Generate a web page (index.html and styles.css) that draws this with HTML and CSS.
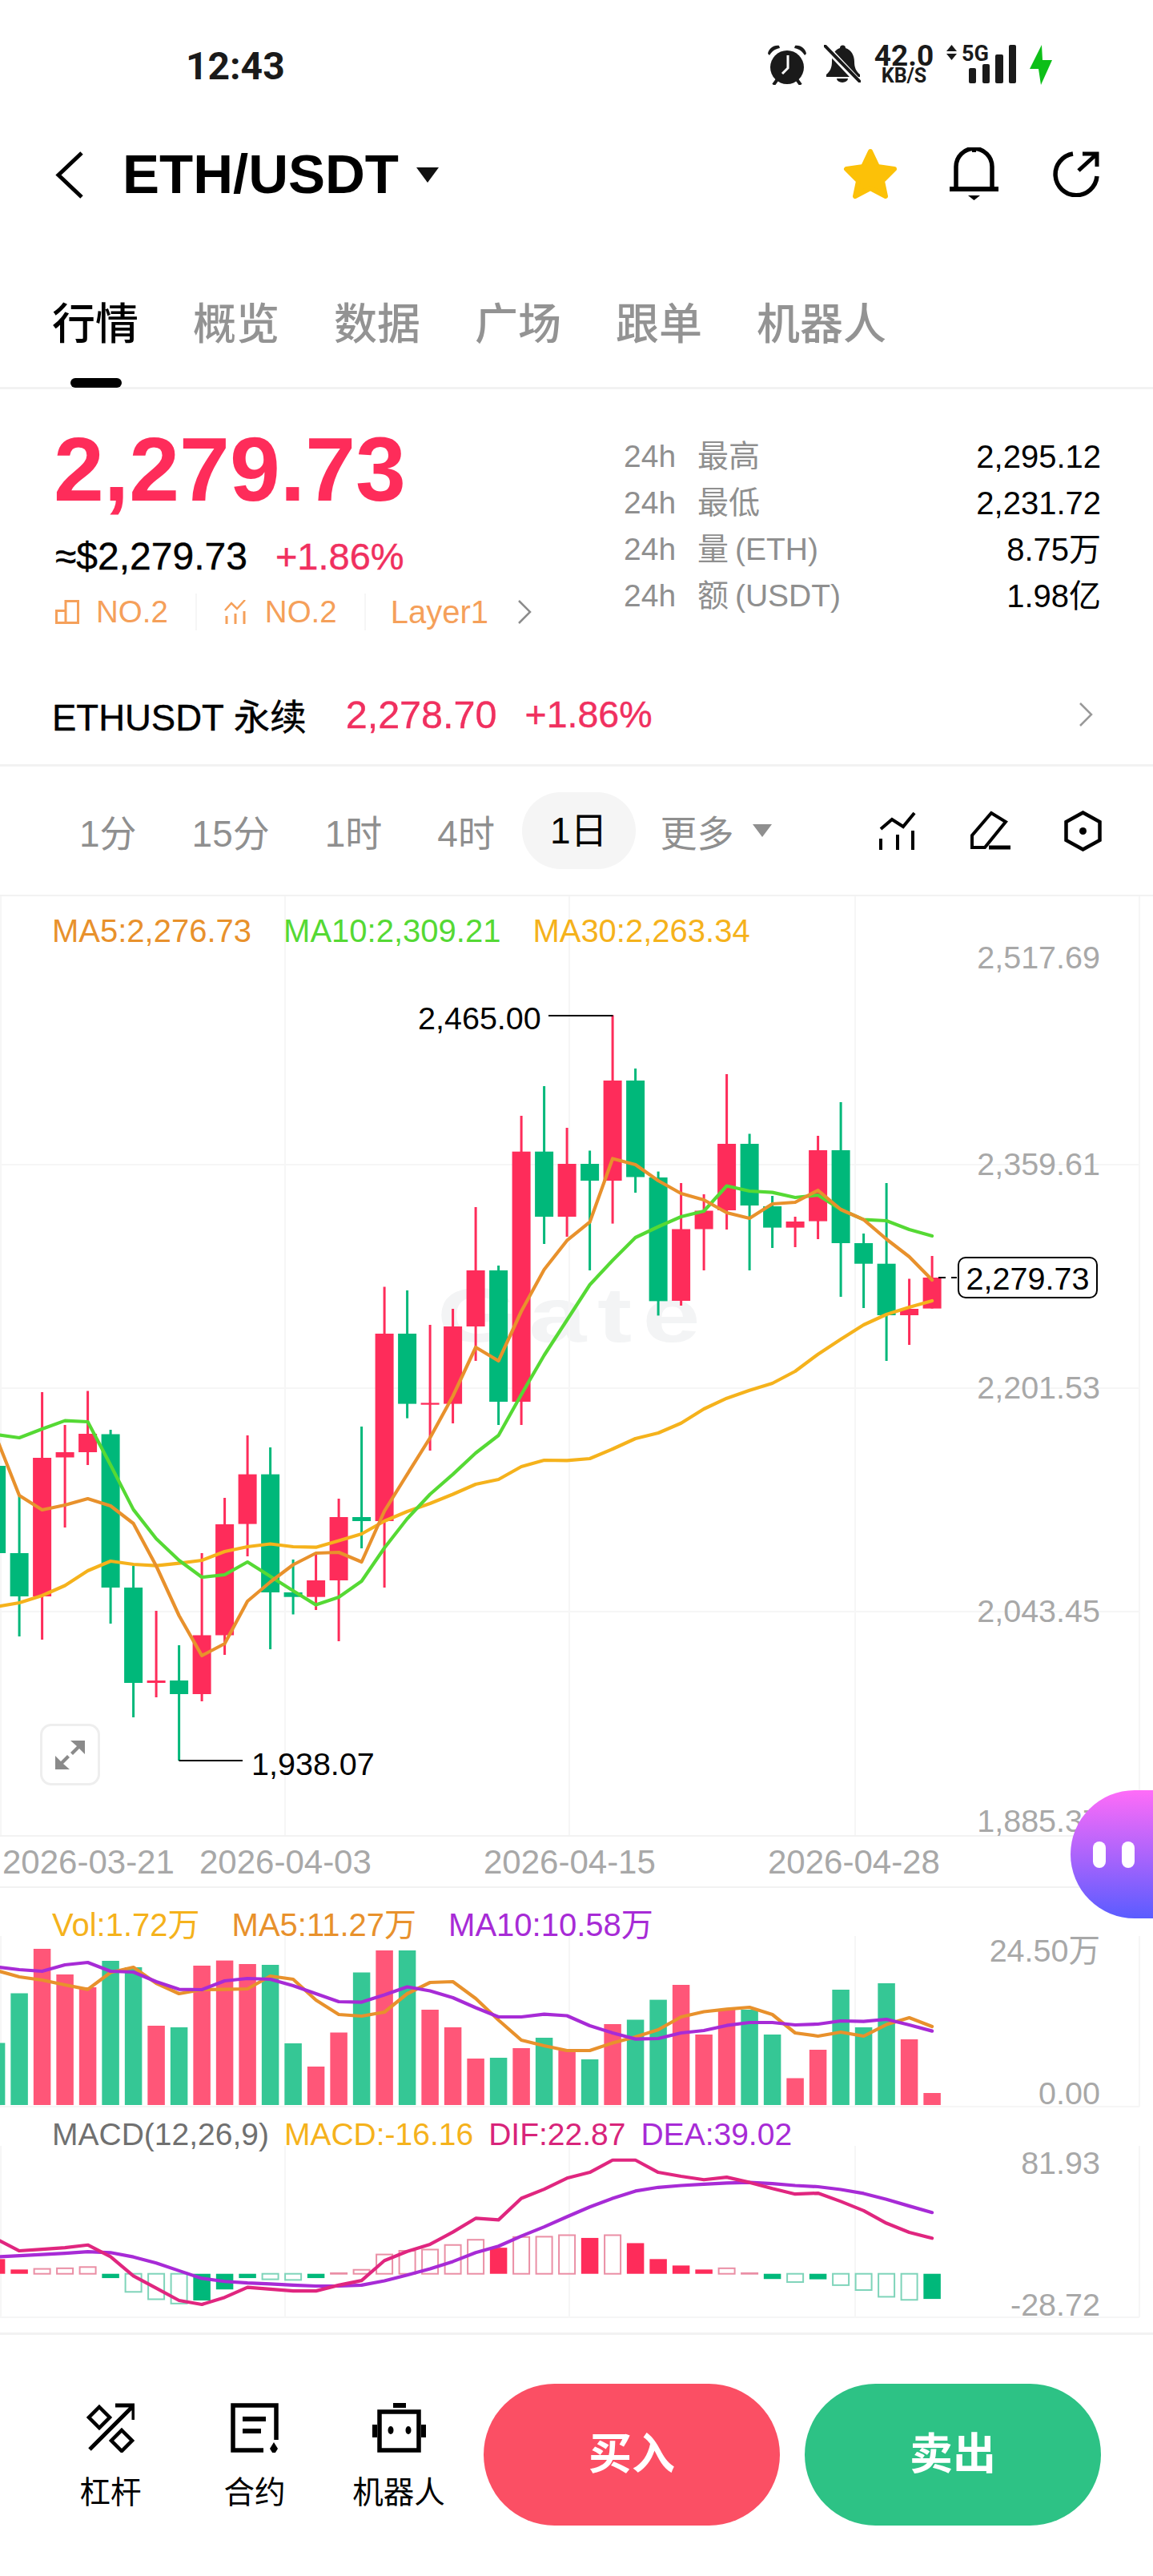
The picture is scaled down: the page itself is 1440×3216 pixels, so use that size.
FILE: index.html
```html
<!DOCTYPE html>
<html lang="zh-CN">
  <head>
    <meta charset="UTF-8" />
    <meta name="viewport" content="width=device-width, initial-scale=1.0" />
    <title>ETH/USDT</title>
    <link rel="stylesheet" href="styles.css">
  </head>
  <body>
    <div class="page">
      <!-- 状态栏 -->
      <div class="status">
        <span class="clock">12:43</span>
        <div class="status-icons">
          <svg class="ic-alarm" width="48" height="50" viewBox="0 0 48 50">
            <circle cx="24" cy="28" r="21" fill="#1a1a1a"/>
            <path d="M0 11C1 5 7 0 14 1L15 4C9 5 5 8 2 13Z" fill="#1a1a1a"/>
            <path d="M48 11C47 5 41 0 34 1L33 4C39 5 43 8 46 13Z" fill="#1a1a1a"/>
            <path d="M25 13V29L18 36" stroke="#fff" stroke-width="3" fill="none"/>
            <path d="M12 43L7 50M36 43L41 50" stroke="#1a1a1a" stroke-width="4"/>
          </svg>
          <svg class="ic-mute" width="46" height="47" viewBox="0 0 46 47">
            <path d="M20 4a3.5 3.5 0 0 1 7 0c7 2 11 9 11 17 0 7 2 12 7 16v3H3v-3c5-4 7-9 7-16 0-8 3-15 10-17z" fill="#1a1a1a"/>
            <path d="M16 42h14a7 5 0 0 1-14 0z" fill="#1a1a1a"/>
            <path d="M-2 -2L44 47" stroke="#fff" stroke-width="8"/>
            <path d="M1 1L45 46" stroke="#1a1a1a" stroke-width="4" stroke-linecap="round"/>
          </svg>
          <div class="netspeed">
            <span class="net-num">42.0</span>
            <span class="net-unit">KB/S</span>
          </div>
          <svg class="ic-signal" width="87" height="58" viewBox="0 -8 87 58">
            <path d="M6.5 0L13 8H0ZM0 11H13L6.5 19Z" fill="#1a1a1a"/>
            <text class="sig-text" x="19" y="20">5G</text>
            <rect x="28" y="29" width="9" height="19" rx="2" fill="#1a1a1a"/>
            <rect x="45" y="24" width="9" height="24" rx="2" fill="#1a1a1a"/>
            <rect x="61" y="12" width="10" height="36" rx="2" fill="#1a1a1a"/>
            <rect x="78" y="0" width="9" height="48" rx="2" fill="#1a1a1a"/>
          </svg>
          <svg class="ic-bolt" width="28" height="50" viewBox="0 0 28 50">
            <path d="M15 0L0 30H11L14 50L28 19H16Z" fill="#0dbf18"/>
          </svg>
        </div>
      </div>

      <!-- 标题 -->
      <div class="header">
        <svg width="35" height="59" viewBox="0 0 35 59">
          <path d="M33 2L4 29.5L33 57" fill="none" stroke="#000" stroke-width="5"/>
        </svg>
        <h1 class="pair">ETH/USDT</h1>
        <span class="caret caret-dark"></span>
        <div class="header-icons">
          <svg width="68" height="64" viewBox="0 0 68 64">
            <path d="M34 4L43 23L64 26L49 41L53 60L34 50L15 60L19 41L4 26L25 23Z" fill="#fcc108" stroke="#fcc108" stroke-width="6" stroke-linejoin="round"/>
          </svg>
          <svg width="61" height="66" viewBox="0 0 61 66">
            <path d="M8 51V24a22.500 22.500 0 0 1 45 0V51" fill="none" stroke="#000" stroke-width="5.500"/>
            <rect x="28" y="0" width="5" height="6"/>
            <rect x="0" y="49" width="61" height="6"/>
            <path d="M23 60H38L30.500 66Z"/>
          </svg>
          <svg class="ic-refresh" width="58" height="58" viewBox="0 0 58 58">
            <path d="M25 4A26 26 0 1 0 55 32" fill="none" stroke="#000" stroke-width="5.500"/>
            <path d="M32 25L55 4M37 4H55V20" fill="none" stroke="#000" stroke-width="5"/>
          </svg>
        </div>
      </div>

      <div class="tabs">
        <span class="tab tab-active">行情</span>
        <span class="tab">概览</span>
        <span class="tab">数据</span>
        <span class="tab">广场</span>
        <span class="tab">跟单</span>
        <span class="tab">机器人</span>
      </div>

      <!-- 行情摘要 -->
      <div class="summary">
        <div class="quote">
          <div class="quote-left">
            <div class="last-price">2,279.73</div>
            <div class="sub-price">
              <span class="fiat">≈$2,279.73</span>
              <span class="change">+1.86%</span>
            </div>
            <div class="tags">
              <svg class="tag-ic" width="30" height="30" viewBox="0 0 30 30">
                <path d="M1.500 13.500H13V28.500H1.500ZM13 28.500V1.500H28.500V28.500H13" fill="none" stroke="#f5a05a" stroke-width="3"/>
              </svg>
              <span>NO.2</span>
              <i class="tag-sep"></i>
              <svg class="tag-ic" width="30" height="30" viewBox="0 0 30 30">
                <path d="M1 13L9 4L16 11L26 0" fill="none" stroke="#f5a05a" stroke-width="2.500"/>
                <path d="M3 20V30M14 17V30M25 14V30" fill="none" stroke="#f5a05a" stroke-width="3"/>
              </svg>
              <span>NO.2</span>
              <i class="tag-sep"></i>
              <span class="tag-layer">Layer1</span>
              <svg class="tag-chev" width="18" height="30" viewBox="0 0 18 30">
                <path d="M2 1L16 15L2 29" fill="none" stroke="#8c8c8c" stroke-width="2.500"/>
              </svg>
            </div>
          </div>
          <div class="stats">
            <div class="stat"><span class="stat-name"><b>24h</b>最高</span><span>2,295.12</span></div>
            <div class="stat"><span class="stat-name"><b>24h</b>最低</span><span>2,231.72</span></div>
            <div class="stat"><span class="stat-name"><b>24h</b>量 (ETH)</span><span>8.75万</span></div>
            <div class="stat"><span class="stat-name"><b>24h</b>额 (USDT)</span><span>1.98亿</span></div>
          </div>
        </div>
        <div class="perp">
          <span class="perp-name">ETHUSDT 永续</span>
          <span class="perp-price">2,278.70</span>
          <span class="perp-change">+1.86%</span>
          <svg class="perp-chev" width="18" height="30" viewBox="0 0 18 30">
            <path d="M2 1L16 15L2 29" fill="none" stroke="#999" stroke-width="2.500"/>
          </svg>
        </div>
      </div>

      <!-- 周期 -->
      <div class="periods">
        <span class="period">1分</span>
        <span class="period">15分</span>
        <span class="period">1时</span>
        <span class="period">4时</span>
        <span class="period period-active">1日</span>
        <span class="period period-more">更多</span>
        <span class="caret caret-gray"></span>
        <div class="period-icons">
          <svg width="46" height="47" viewBox="0 0 46 47">
            <path d="M2 21L16 9L30 18L44 1" fill="none" stroke="#000" stroke-width="4"/>
            <path d="M2 33V47M23 28V47M42 23V47" fill="none" stroke="#000" stroke-width="4"/>
          </svg>
          <svg width="51" height="51" viewBox="0 0 51 51">
            <path d="M27 3L45 14L19 46H3V31Z" fill="none" stroke="#000" stroke-width="4"/>
            <path d="M24 46H51" fill="none" stroke="#000" stroke-width="5"/>
          </svg>
          <svg width="47" height="51" viewBox="0 0 47 51">
            <path d="M23.500 2.500L44.500 14V37L23.500 48.500L2.500 37V14Z" fill="none" stroke="#000" stroke-width="4.500"/>
            <circle cx="23.500" cy="25.500" r="4.500"/>
          </svg>
        </div>
      </div>

      <!-- 主图 -->
      <div class="panel panel-main">
        <div class="watermark">Gate</div>
        <svg class="plot" id="plotMain" viewBox="0 1118 1440 1174"></svg>
        <div class="legend">
          <span class="c-ma5">MA5:2,276.73</span>
          <span class="c-ma10">MA10:2,309.21</span>
          <span class="c-ma30">MA30:2,263.34</span>
        </div>
        <span class="tick tick-p1">2,517.69</span>
        <span class="tick tick-p2">2,359.61</span>
        <span class="tick tick-p3">2,201.53</span>
        <span class="tick tick-p4">2,043.45</span>
        <span class="tick tick-p5">1,885.37</span>
        <span class="extreme extreme-high">2,465.00</span>
        <span class="extreme extreme-low">1,938.07</span>
        <span class="price-tag">2,279.73</span>
        <div class="expand">
          <svg width="37" height="36" viewBox="0 0 37 36">
            <path d="M37 0V17L30 10L22 18L19 15L27 7L19 0ZM0 36V19L7 26L15 18L18 21L10 29L18 36Z" fill="#8a8a8a"/>
          </svg>
        </div>
      </div>

      <div class="dates">
        <span class="date">2026-03-21</span>
        <span class="date date-second">2026-04-03</span>
        <span class="date">2026-04-15</span>
        <span class="date">2026-04-28</span>
      </div>

      <!-- 成交量 -->
      <div class="panel panel-vol">
        <svg class="plot" id="plotVol" viewBox="0 2358 1440 274"></svg>
        <div class="legend legend-vol">
          <span class="c-ma30">Vol:1.72万</span>
          <span class="c-ma5">MA5:11.27万</span>
          <span class="c-purple">MA10:10.58万</span>
        </div>
        <span class="tick tick-v1">24.50万</span>
        <span class="tick tick-v2">0.00</span>
      </div>

      <!-- MACD -->
      <div class="panel panel-macd">
        <svg class="plot" id="plotMacd" viewBox="0 2632 1440 263"></svg>
        <div class="legend legend-macd">
          <span class="c-gray">MACD(12,26,9)</span>
          <span class="c-ma30">MACD:-16.16</span>
          <span class="c-dif">DIF:22.87</span>
          <span class="c-purple">DEA:39.02</span>
        </div>
        <span class="tick tick-m1">81.93</span>
        <span class="tick tick-m2">-28.72</span>
      </div>

      <!-- 底部操作 -->
      <div class="footer">
        <div class="tool">
          <svg width="60" height="62" viewBox="0 0 60 62">
            <path d="M16 5L29 18L16 31L3 18ZM44 34L57 47L44 60L31 47Z" fill="none" stroke="#000" stroke-width="4.500"/>
            <path d="M4 58L58 4M36 3H59V21" fill="none" stroke="#000" stroke-width="5"/>
          </svg>
          <span>杠杆</span>
        </div>
        <div class="tool">
          <svg width="60" height="62" viewBox="0 0 60 62">
            <path d="M57 46V3H3V59H41" fill="none" stroke="#000" stroke-width="5.500"/>
            <path d="M15 20H44M15 35H38" fill="none" stroke="#000" stroke-width="6"/>
            <path d="M54 49L59 57L54 65L49 57Z"/>
          </svg>
          <span>合约</span>
        </div>
        <div class="tool">
          <svg width="67" height="62" viewBox="0 0 67 62">
            <path d="M9 11H58V59H9Z" fill="none" stroke="#000" stroke-width="5.500"/>
            <rect x="26" y="0" width="16" height="6"/>
            <rect x="0" y="27" width="6" height="16"/>
            <rect x="61" y="27" width="6" height="16"/>
            <ellipse cx="23" cy="34" rx="3.500" ry="5"/>
            <ellipse cx="45" cy="34" rx="3.500" ry="5"/>
          </svg>
          <span>机器人</span>
        </div>
        <div class="trade trade-buy">买入</div>
        <div class="trade trade-sell">卖出</div>
      </div>

      <div class="assistant"><i></i><i></i></div>
    </div>
    <script src="chart.js"></script>
  </body>
</html>
```

FILE: styles.css
```css
* {
  box-sizing: border-box;
}
body {
  margin: 0;
  background-color: white;
  color: black;
  font-family: "Liberation Sans", "Noto Sans CJK SC", sans-serif;
}
.page {
  position: relative;
  width: 1440px;
  height: 3216px;
  overflow: hidden;
}

/* status bar */
.status {
  display: flex;
  align-items: center;
  height: 164px;
  padding: 0 126px 0 232px;
}
.clock {
  font-family: Roboto, sans-serif;
  font-size: 48px;
  font-weight: 700;
  color: #1a1a1a;
}
.status-icons {
  display: flex;
  align-items: flex-start;
  margin-left: auto;
  height: 50px;
  margin-top: -2px;
}
.ic-mute {
  margin-left: 22px;
}
.netspeed {
  display: flex;
  flex-direction: column;
  align-items: center;
  width: 78px;
  margin-left: 15px;
  color: #1a1a1a;
  font-family: Roboto, sans-serif;
  font-weight: 700;
}
.net-num {
  font-size: 37px;
  line-height: 28px;
}
.net-unit {
  font-size: 25px;
  line-height: 22px;
}
.ic-signal {
  margin: -8px 0 0 14px;
}
.sig-text {
  font-family: Roboto, sans-serif;
  font-weight: 700;
  font-size: 27px;
  fill: #1a1a1a;
}
.ic-bolt {
  margin-left: 17px;
}

/* header */
.header {
  display: flex;
  align-items: center;
  height: 108px;
  padding: 0 67px 0 69px;
}
.pair {
  margin: 0 0 0 49px;
  font-size: 69px;
  font-weight: 700;
  line-height: 80px;
}
.caret {
  width: 0;
  height: 0;
  border-style: solid;
  border-color: transparent;
}
.caret-dark {
  margin-left: 22px;
  border-width: 19px 14px 0;
  border-top-color: #111;
}
.header-icons {
  display: flex;
  align-items: center;
  gap: 65px;
  margin: -2px 0 0 auto;
}
.ic-refresh {
  margin-left: 3px;
}

/* tabs */
.tabs {
  display: flex;
  gap: 68px;
  height: 214px;
  padding: 101px 0 0 65px;
  border-bottom: 3px solid #f2f2f2;
}
.tab {
  position: relative;
  height: 64px;
  font-size: 54px;
  font-weight: 500;
  line-height: 64px;
  color: #939393;
}
.tab-active {
  color: #000;
}
.tab-active::after {
  content: "";
  position: absolute;
  left: 23px;
  top: 99px;
  width: 64px;
  height: 12px;
  border-radius: 6px;
  background-color: #000;
}

/* summary */
.summary {
  height: 471px;
  border-bottom: 3px solid #f2f2f2;
}
.quote {
  display: flex;
  justify-content: space-between;
  height: 344px;
  padding: 0 65px 0 67px;
}
.quote-left {
  padding-top: 35px;
}
.last-price {
  font-size: 113px;
  font-weight: 700;
  line-height: 130px;
  color: #fe2c5a;
}
.sub-price {
  display: flex;
  align-items: center;
  gap: 35px;
  margin-top: 13px;
  padding-left: 2px;
  height: 60px;
  -webkit-text-stroke: 0.4px currentColor;
}
.fiat {
  font-size: 48px;
}
.change {
  font-size: 47px;
  color: #f0305f;
}
.tags {
  display: flex;
  align-items: center;
  height: 50px;
  margin-top: 15px;
  padding-left: 2px;
  font-size: 38.500px;
  color: #f5a05a;
}
.tag-ic {
  margin-right: 21px;
}
.tag-sep {
  width: 2px;
  height: 46px;
  margin: 0 34px;
  background-color: #f6f6f6;
}
.tag-layer {
  margin-left: -3px;
  font-size: 40px;
}
.tag-chev {
  margin-left: 36px;
}
.stats {
  width: 596px;
  padding-top: 55px;
}
.stat {
  display: flex;
  justify-content: space-between;
  height: 58px;
  font-size: 40px;
  line-height: 58px;
}
.stat-name {
  color: #8f8f8f;
  font-size: 39px;
  word-spacing: -3px;
}
.stat-name b {
  margin-right: 27px;
  font-weight: 400;
}
.perp {
  display: flex;
  align-items: center;
  height: 124px;
  padding: 0 75px 0 65px;
  font-size: 45.500px;
  -webkit-text-stroke: 0.4px currentColor;
}
.perp-price {
  margin-left: 49px;
  font-size: 48.500px;
  color: #f0305f;
}
.perp-change {
  margin-left: 35px;
  font-size: 46.500px;
  color: #f0305f;
}
.perp-chev {
  margin-left: auto;
}

/* periods */
.periods {
  display: flex;
  align-items: center;
  gap: 69px;
  height: 160px;
  padding: 0 64px 0 99px;
  font-size: 46px;
  color: #8f8f8f;
}
.period-active {
  margin: 0 -35px;
  padding: 0 35px;
  height: 96px;
  border-radius: 48px;
  line-height: 96px;
  background-color: #f5f5f5;
  color: #000;
}
.period-more {
  margin-left: -3px;
}
.caret-gray {
  margin-left: -46px;
  border-width: 16px 12px 0;
  border-top-color: #8f8f8f;
}
.period-icons {
  display: flex;
  align-items: center;
  gap: 67px;
  margin-left: auto;
}

/* chart panels */
.panel {
  position: relative;
}
.panel-main {
  height: 1174px;
}
.panel-vol {
  height: 274px;
}
.panel-macd {
  height: 263px;
}
.plot {
  position: absolute;
  left: 0;
  top: 0;
  width: 1440px;
  height: 100%;
}
.legend {
  position: relative;
  display: flex;
  gap: 40px;
  padding: 21px 0 0 65px;
  font-size: 40px;
  line-height: 48px;
}
.legend-vol {
  padding-top: 22px;
}
.legend-macd {
  gap: 19px;
  padding-top: 10px;
  font-size: 39px;
}
.c-ma5 {
  color: #e8912c;
}
.c-ma10 {
  color: #55d934;
}
.c-ma30 {
  color: #f5b21c;
}
.c-purple {
  color: #a72bd6;
}
.c-gray {
  color: #707070;
}
.c-dif {
  color: #d8247a;
}
.tick {
  position: absolute;
  right: 66px;
  font-size: 39.500px;
  line-height: 48px;
  color: #a8a8a8;
}
.tick-p1 {
  top: 54px;
}
.tick-p2 {
  top: 312px;
}
.tick-p3 {
  top: 591px;
}
.tick-p4 {
  top: 870px;
}
.tick-p5 {
  top: 1132px;
}
.tick-v1 {
  top: 54px;
}
.tick-v2 {
  top: 232px;
}
.tick-m1 {
  top: 45px;
}
.tick-m2 {
  top: 222px;
}
.extreme {
  position: absolute;
  font-size: 39.500px;
  line-height: 48px;
}
.extreme-high {
  left: 522px;
  top: 130px;
}
.extreme-low {
  left: 314px;
  top: 1061px;
}
.price-tag {
  position: absolute;
  left: 1196px;
  top: 452px;
  width: 175px;
  height: 52px;
  border: 2px solid #000;
  border-radius: 10px;
  background-color: white;
  font-size: 39.500px;
  line-height: 50px;
  text-align: center;
}
.expand {
  position: absolute;
  left: 50px;
  top: 1035px;
  display: flex;
  align-items: center;
  justify-content: center;
  width: 75px;
  height: 77px;
  border: 3px solid #eee;
  border-radius: 14px;
  background-color: white;
}
.watermark {
  position: absolute;
  left: 546px;
  top: 470px;
  font-size: 96px;
  font-weight: 700;
  line-height: 110px;
  letter-spacing: 10px;
  color: #f3f4f5;
  transform: scaleX(1.35);
  transform-origin: left center;
}
.dates {
  display: flex;
  align-items: center;
  gap: 143px;
  height: 66px;
  padding: 2px 0 0 3px;
  border-top: 2px solid #f2f2f2;
  border-bottom: 2px solid #f2f2f2;
  font-size: 42px;
  color: #a8a8a8;
}
.date {
  width: 212px;
  white-space: nowrap;
}
.date-second {
  margin-left: -109px;
}

/* footer */
.footer {
  display: flex;
  align-items: flex-start;
  height: 303px;
  margin-top: 18px;
  padding: 61px 0 0 48px;
  border-top: 3px solid #f2f2f2;
}
.tool {
  display: flex;
  flex-direction: column;
  align-items: center;
  width: 180px;
  padding-top: 24px;
  font-size: 38.500px;
}
.tool span {
  margin-top: 24px;
  line-height: 52px;
}
.trade {
  width: 370px;
  height: 177px;
  border-radius: 89px;
  font-size: 54px;
  font-weight: 700;
  line-height: 177px;
  text-align: center;
  color: white;
}
.trade-buy {
  margin-left: 16px;
  background-color: #fb4f64;
}
.trade-sell {
  margin-left: 31px;
  background-color: #2dc285;
}

.assistant {
  position: absolute;
  left: 1337px;
  top: 2235px;
  display: flex;
  align-items: center;
  gap: 20px;
  width: 103px;
  height: 160px;
  padding-left: 28px;
  border-radius: 80px 0 0 80px;
  background: linear-gradient(#ff6cf8, #5a5cff);
}
.assistant i {
  width: 16px;
  height: 33px;
  border-radius: 8px;
  background-color: white;
}
```

FILE: chart.js
```js
const NS = "http://www.w3.org/2000/svg";
const RED = "#fe2c5a";
const GREEN = "#00b87a";
const BAR_RED = "#ff5678";
const BAR_GREEN = "#35c795";
const GRID = "#f6f6f6";
const ORANGE = "#e8912c";
const LIME = "#55d934";
const GOLD = "#f5b21c";
const PURPLE = "#a72bd6";
const PINK = "#e0267f";

// 第 i 根 K 线的中心 x
function xAt(i) {
  return -4.4 + 28.5 * i;
}

function add(svg, tag, attrs) {
  const el = document.createElementNS(NS, tag);
  for (const k in attrs) el.setAttribute(k, attrs[k]);
  svg.appendChild(el);
  return el;
}

function rect(svg, x, y1, y2, w, fill) {
  add(svg, "rect", { x: x - w / 2, y: y1, width: w, height: Math.max(y2 - y1, 1), fill: fill });
}

function hLine(svg, y, x1, x2, color) {
  add(svg, "line", { x1: x1, x2: x2, y1: y, y2: y, stroke: color || GRID, "stroke-width": 2 });
}

function vLines(svg, y1, y2) {
  [1, 356, 711, 1068, 1423].forEach((x) => {
    add(svg, "line", { x1: x, x2: x, y1: y1, y2: y2, stroke: GRID, "stroke-width": 2 });
  });
}

function line(svg, ys, color) {
  const pts = ys.map((y, i) => xAt(i) + "," + y).join(" ");
  add(svg, "polyline", {
    points: pts,
    fill: "none",
    stroke: color,
    "stroke-width": 4.2,
    "stroke-linejoin": "round",
    "stroke-linecap": "round",
  });
}

// [high, open/close top, open/close bottom, low, 1 = up]
const candles = [
  [1790, 1831, 1940, 2000, 0],
  [1868, 1940, 1994, 2044, 0],
  [1739, 1821, 1994, 2048, 1],
  [1780, 1814, 1820.5, 1908, 1],
  [1737.5, 1791, 1814, 1830, 1],
  [1786, 1791.5, 1983, 2028, 0],
  [1956, 1983, 2102, 2145, 0],
  [2012, 2099, 2102, 2120, 1],
  [2055, 2099, 2116, 2199, 0],
  [1940, 2042.5, 2116, 2125, 1],
  [1871, 1904, 2042.5, 2067, 1],
  [1793, 1841.6, 1903.6, 1944, 1],
  [1808, 1841.6, 1989, 2060, 0],
  [1948, 1989, 1994.7, 2016.5, 0],
  [1941, 1974, 1994.7, 2011, 1],
  [1872, 1895, 1974, 2050, 1],
  [1782, 1895, 1900, 1934, 0],
  [1607.5, 1666, 1900, 1983, 1],
  [1612, 1666, 1753.6, 1771.6, 0],
  [1655, 1752.4, 1754.7, 1812, 1],
  [1635, 1657, 1753.6, 1778, 1],
  [1508, 1587, 1657, 1700, 1],
  [1581, 1587, 1751, 1780, 0],
  [1394, 1438.7, 1751, 1780, 1],
  [1357, 1438.7, 1520, 1554, 0],
  [1409, 1454, 1520, 1545, 1],
  [1437.5, 1454, 1475, 1587, 0],
  [1268.4, 1350, 1475, 1528.6, 1],
  [1335, 1350, 1470.5, 1490, 0],
  [1463.6, 1471, 1625.4, 1643.4, 0],
  [1478, 1535.5, 1625, 1631, 1],
  [1492, 1512.5, 1535.5, 1587, 1],
  [1342, 1429, 1512, 1536, 1],
  [1416.5, 1429, 1506, 1587, 0],
  [1494, 1507, 1533.6, 1559, 0],
  [1520, 1526, 1533.6, 1558, 1],
  [1419, 1437, 1525.6, 1548, 1],
  [1377, 1437, 1553, 1620, 0],
  [1541, 1553, 1578.7, 1634, 0],
  [1478, 1578.7, 1643, 1700, 0],
  [1597.5, 1635, 1643, 1680, 1],
  [1569, 1596, 1634.6, 1634.6, 1],
];

const ma5 = [1796, 1868, 1886, 1880, 1872, 1881, 1903, 1956, 2018, 2068, 2053, 2000, 1976, 1954.5, 1940, 1939, 1951, 1887.5, 1841.6, 1796, 1744, 1683, 1700, 1638, 1586, 1549.7, 1526.7, 1447.5, 1455, 1475, 1491, 1499, 1515, 1522, 1504, 1502, 1487, 1511, 1523.6, 1548, 1570, 1599];
const ma10 = [1792, 1796, 1785, 1774.6, 1776, 1830, 1885.6, 1922, 1949, 1970, 1967, 1951, 1969, 1987, 2004.6, 1995, 1975, 1933.5, 1897, 1866.5, 1841.6, 1815, 1793, 1742, 1693, 1649, 1605, 1574.5, 1546, 1532.5, 1520, 1513, 1481.5, 1488, 1489.6, 1496, 1493, 1511, 1523.6, 1525, 1536, 1544];
const ma30 = [2007, 2002, 1993, 1980.5, 1962, 1950, 1954, 1955.6, 1952.6, 1949, 1938, 1932, 1928.5, 1932, 1932.7, 1924.6, 1916, 1900, 1888, 1878, 1866.5, 1854, 1848, 1832, 1824, 1824.3, 1822, 1810, 1797, 1790, 1777.7, 1760, 1746.7, 1736.7, 1728, 1713, 1691.7, 1673, 1655, 1642, 1633, 1625];

const volTops = [2551.5, 2489.5, 2434, 2466, 2482, 2449, 2457, 2530, 2532, 2455, 2448.6, 2453, 2454, 2552, 2581, 2538.5, 2463.5, 2436, 2436, 2510, 2532, 2571, 2570, 2558, 2545, 2561, 2572, 2528, 2522.5, 2497.6, 2479, 2541, 2509.4, 2510, 2541, 2595.5, 2560, 2485, 2532, 2477, 2547, 2614];
const volMa5 = [2461, 2469, 2473, 2479, 2484.6, 2463.5, 2457, 2477, 2490, 2485, 2484.6, 2484, 2468, 2472, 2498, 2516, 2518, 2513, 2490, 2476, 2475, 2496, 2523, 2548, 2555, 2561, 2561, 2551.5, 2544, 2535, 2519, 2512.5, 2509.4, 2507, 2516, 2539, 2543, 2538, 2543, 2528.6, 2520, 2531];
const volMa10 = [2456.6, 2460, 2462, 2454, 2451, 2462, 2463, 2475, 2484.6, 2485, 2474, 2471, 2472, 2480, 2490, 2500, 2500.6, 2491.5, 2481.5, 2486.5, 2495, 2507.5, 2519, 2519, 2515.6, 2517.5, 2530, 2539, 2546.6, 2546, 2539, 2536, 2529.7, 2526, 2526, 2529, 2528, 2524, 2524.7, 2522, 2529, 2536.6];

// MACD 数据按裁剪图的刻度记录，再换算成页面坐标
const mY = (v) => 2320 + v / 2.613;
const MACD_ZERO = 1358;
// [bar end, 1 = solid]
const macdBars = [
  [1310, 1], [1344, 1], [1342, 0], [1340, 0], [1336, 0], [1372, 1], [1417, 0], [1441, 0], [1455, 0], [1445, 1],
  [1409, 1], [1372, 1], [1376, 0], [1378, 0], [1372, 1], [1356, 0], [1345, 0], [1295, 0], [1283, 0], [1279, 0],
  [1264, 0], [1247, 0], [1273, 1], [1238, 0], [1237, 0], [1232, 0], [1241, 1], [1232, 0], [1258, 1], [1310, 1],
  [1331, 1], [1344, 1], [1340, 0], [1356, 0], [1375, 1], [1385, 0], [1376, 1], [1395, 0], [1411, 0], [1433, 0],
  [1443, 0], [1440, 1],
];
const dif = [1245, 1283, 1278, 1273, 1264, 1302, 1365, 1405, 1445, 1458, 1435, 1402, 1408, 1414, 1414, 1395, 1380, 1315, 1285, 1262, 1222, 1177, 1182, 1112, 1082, 1046, 1027, 987, 987, 1027, 1040, 1051, 1043, 1060, 1080, 1098, 1095, 1122, 1152, 1193, 1223, 1242];
const dea = [1303, 1299, 1295, 1291, 1286, 1289, 1303, 1323, 1348, 1373, 1383, 1388, 1391, 1395, 1398, 1398, 1395, 1381, 1362, 1342, 1318, 1289, 1268, 1235, 1205, 1172, 1140, 1112, 1088, 1076, 1070, 1066, 1062, 1060, 1064, 1070, 1074, 1083, 1096, 1115, 1137, 1158];

function drawMain() {
  const svg = document.getElementById("plotMain");
  hLine(svg, 1119, 0, 1440, "#f2f2f2");
  vLines(svg, 1120, 2292);
  [1455, 1734, 2013].forEach((y) => hLine(svg, y, 0, 1423));
  candles.forEach((c, i) => {
    const color = c[4] ? RED : GREEN;
    const x = xAt(i);
    rect(svg, x, c[0], c[3], 3, color);
    rect(svg, x, c[1], c[2], 23, color);
  });
  line(svg, ma30, GOLD);
  line(svg, ma10, LIME);
  line(svg, ma5, ORANGE);

  // 最高、最低价引线
  add(svg, "path", { d: "M685 1269H765.5", stroke: "#000", "stroke-width": 2, fill: "none" });
  add(svg, "path", { d: "M223.5 2199H303", stroke: "#000", "stroke-width": 2, fill: "none" });
  add(svg, "path", { d: "M1172 1596H1195", stroke: "#000", "stroke-width": 2, "stroke-dasharray": "9 7", fill: "none" });
}

function drawVol() {
  const svg = document.getElementById("plotVol");
  vLines(svg, 2418, 2631);
  hLine(svg, 2631, 0, 1423);
  candles.forEach((c, i) => {
    rect(svg, xAt(i), volTops[i], 2629, 21.5, c[4] ? BAR_RED : BAR_GREEN);
  });
  line(svg, volMa5, ORANGE);
  line(svg, volMa10, PURPLE);
}

function drawMacd() {
  const svg = document.getElementById("plotMacd");
  vLines(svg, 2680, 2894);
  hLine(svg, 2894, 0, 1423);
  macdBars.forEach((b, i) => {
    const up = b[0] < MACD_ZERO;
    const y1 = mY(Math.min(b[0], MACD_ZERO));
    const y2 = mY(Math.max(b[0], MACD_ZERO));
    if (b[1]) {
      rect(svg, xAt(i), y1, y2, 21.5, up ? RED : GREEN);
    } else {
      add(svg, "rect", {
        x: xAt(i) - 10,
        y: y1,
        width: 20,
        height: y2 - y1,
        fill: "none",
        stroke: up ? "#ea8fa5" : "#7fd4ba",
        "stroke-width": 2,
      });
    }
  });
  line(svg, dea.map(mY), PURPLE);
  line(svg, dif.map(mY), PINK);
}

drawMain();
drawVol();
drawMacd();
```
